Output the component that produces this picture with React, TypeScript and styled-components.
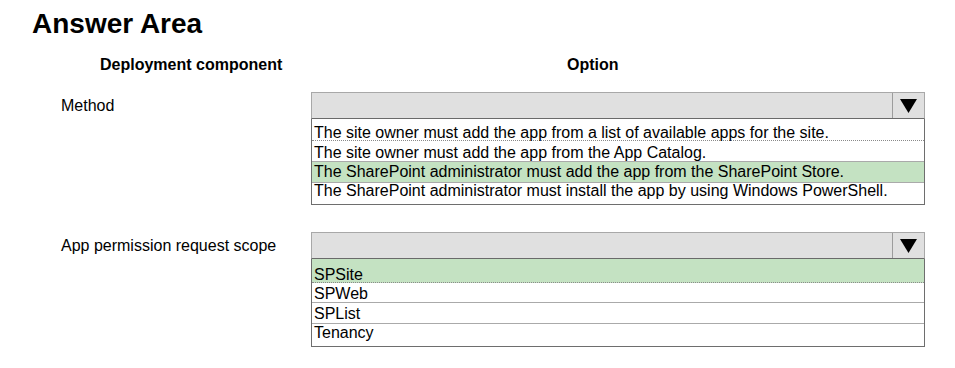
import React from 'react';
import styled, { createGlobalStyle } from 'styled-components';

const GlobalStyle = createGlobalStyle`
  body {
    margin: 0;
    background: #ffffff;
    font-family: "Liberation Sans", Arial, sans-serif;
    color: #000000;
  }
`;

// shift > 0 pushes the text down inside its row, shift < 0 pulls it up
type Option = { text: string; h: number; shift: number; selected?: boolean; dotted?: boolean };

type Question = { label: string; options: Option[] };

const questions: Question[] = [
  {
    label: 'Method',
    options: [
      { text: 'The site owner must add the app from a list of available apps for the site.', h: 22, shift: 5, dotted: true },
      { text: 'The site owner must add the app from the App Catalog.', h: 21, shift: 2 },
      { text: 'The SharePoint administrator must add the app from the SharePoint Store.', h: 21, shift: -2, selected: true },
      { text: 'The SharePoint administrator must install the app by using Windows PowerShell.', h: 21, shift: -6 },
    ],
  },
  {
    label: 'App permission request scope',
    options: [
      { text: 'SPSite', h: 24, shift: 8, selected: true, dotted: true },
      { text: 'SPWeb', h: 20, shift: 2 },
      { text: 'SPList', h: 21, shift: 0 },
      { text: 'Tenancy', h: 22, shift: -6 },
    ],
  },
];

const Page = styled.div`
  padding: 8px 0 0 32px;
`;

const Title = styled.h1`
  margin: 0;
  font-size: 28px;
  line-height: 32px;
  font-weight: bold;
`;

const Grid = styled.div`
  display: grid;
  grid-template-columns: 279px 614px;
  margin-top: 15px;
`;

const HeadCell = styled.div<{ $indent: number }>`
  padding-left: ${(p) => p.$indent}px;
  font-size: 16px;
  line-height: 20px;
  font-weight: bold;
  height: 37px;
`;

const Label = styled.div`
  padding-left: 29px;
  height: 27px;
  display: flex;
  align-items: center;
  font-size: 16px;
`;

const Select = styled.div<{ $gap: number }>`
  display: flex;
  flex-direction: column;
  margin-bottom: ${(p) => p.$gap}px;
`;

const SelectHead = styled.div`
  display: flex;
  box-sizing: border-box;
  height: 27px;
  background: #e0e0e0;
  border: 1px solid #a8a8a8;
  border-bottom-color: #6a6a6a;
`;

const ArrowCell = styled.div`
  margin-left: auto;
  width: 31px;
  border-left: 1px solid #9c9c9c;
  display: flex;
  align-items: center;
  justify-content: center;
`;

const List = styled.div`
  border: 1px solid #6e6e6e;
  border-top: none;
`;

const Row = styled.div<{ $h: number; $shift: number; $selected?: boolean; $dotted?: boolean }>`
  box-sizing: border-box;
  height: ${(p) => p.$h}px;
  padding: ${(p) => Math.max(p.$shift, 0)}px 0 ${(p) => Math.max(-p.$shift, 0)}px 2px;
  display: flex;
  align-items: center;
  font-size: 16px;
  line-height: 17px;
  white-space: nowrap;
  background: ${(p) => (p.$selected ? '#c4e2c2' : '#ffffff')};
  border-bottom: 1px ${(p) => (p.$dotted ? 'dotted #8a8a8a' : 'solid #aaaaaa')};

  &:last-child {
    border-bottom: none;
  }
`;

const Arrow = () => (
  <svg width="17" height="14" viewBox="0 0 17 14">
    <polygon points="0,0 17,0 8.5,14" fill="#000" />
  </svg>
);

export default function App() {
  return (
    <>
      <GlobalStyle />
      <Page>
        <Title>Answer Area</Title>
        <Grid>
          <HeadCell $indent={68}>Deployment component</HeadCell>
          <HeadCell $indent={256}>Option</HeadCell>
          {questions.map((q, i) => (
            <React.Fragment key={q.label}>
              <Label>{q.label}</Label>
              <Select $gap={i === 0 ? 27 : 0}>
                <SelectHead>
                  <ArrowCell>
                    <Arrow />
                  </ArrowCell>
                </SelectHead>
                <List>
                  {q.options.map((o) => (
                    <Row key={o.text} $h={o.h} $shift={o.shift} $selected={o.selected} $dotted={o.dotted}>
                      {o.text}
                    </Row>
                  ))}
                </List>
              </Select>
            </React.Fragment>
          ))}
        </Grid>
      </Page>
    </>
  );
}
